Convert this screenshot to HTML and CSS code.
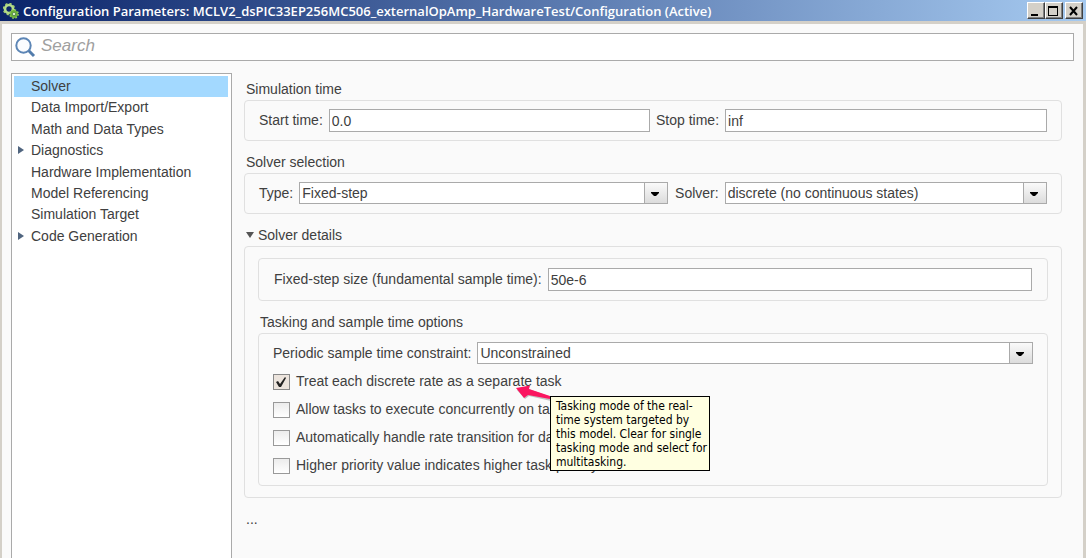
FILE: index.html
```html
<!DOCTYPE html>
<html lang="en">
<head>
<meta charset="utf-8">
<title>Configuration Parameters</title>
<link rel="stylesheet" href="styles.css">
</head>
<body>
<div class="window">
  <header class="titlebar">
    <svg class="app-icon" width="16" height="16" viewBox="0 0 16 16" aria-hidden="true">
      <circle cx="6" cy="6" r="4" fill="none" stroke="#b5dd8c" stroke-width="2.6"/>
      <circle cx="6" cy="6" r="5.4" fill="none" stroke="#a5d175" stroke-width="1.6" stroke-dasharray="2.2 2"/>
      <circle cx="11" cy="11" r="2.8" fill="#173a5c" stroke="#6cb03a" stroke-width="2.4"/>
      <circle cx="11" cy="11" r="4.2" fill="none" stroke="#8cc858" stroke-width="1.4" stroke-dasharray="1.7 1.6"/>
      <circle cx="11" cy="11" r="1.3" fill="#d9eec4"/>
    </svg>
    <h1 class="title">Configuration Parameters: MCLV2_dsPIC33EP256MC506_externalOpAmp_HardwareTest/Configuration (Active)</h1>
    <div class="window-buttons">
      <button class="window-button" type="button" aria-label="Minimize">
        <svg width="14" height="12" viewBox="0 0 14 12"><path d="M2 9h7v2H2z"/></svg>
      </button>
      <button class="window-button" type="button" aria-label="Maximize">
        <svg width="14" height="12" viewBox="0 0 14 12"><path fill-rule="evenodd" d="M1 1h10v10H1zM2 3v7h8V3z"/></svg>
      </button>
      <button class="window-button close" type="button" aria-label="Close">
        <svg width="14" height="12" viewBox="0 0 14 12"><path d="M3 2l7 8M10 2l-7 8" stroke="#000" stroke-width="2"/></svg>
      </button>
    </div>
  </header>
  <div class="client">
    <label class="search">
      <svg width="21" height="21" viewBox="0 0 21 21" aria-hidden="true">
        <circle cx="8.500" cy="8.500" r="7.200" fill="#fbfcfe" stroke="#5d86b6" stroke-width="2"/>
        <path d="M13.800 13.800l5.200 5.200" stroke="#527cac" stroke-width="3"/>
      </svg>
      <input class="search-input" type="search" placeholder="Search" aria-label="Search">
    </label>
    <div class="columns">
      <nav class="tree" aria-label="Categories">
        <ul class="tree-list">
          <li><a class="tree-item selected" href="#solver">Solver</a></li>
          <li><a class="tree-item" href="#data">Data Import/Export</a></li>
          <li><a class="tree-item" href="#math">Math and Data Types</a></li>
          <li><a class="tree-item expandable" href="#diagnostics">Diagnostics</a></li>
          <li><a class="tree-item" href="#hardware">Hardware Implementation</a></li>
          <li><a class="tree-item" href="#model">Model Referencing</a></li>
          <li><a class="tree-item" href="#target">Simulation Target</a></li>
          <li><a class="tree-item expandable" href="#code">Code Generation</a></li>
        </ul>
      </nav>
      <main class="panel">
        <section class="section">
          <h2 class="heading">Simulation time</h2>
          <div class="group row">
            <div class="field">
              <label for="start">Start time:</label>
              <input class="text" id="start" type="text" value="0.0">
            </div>
            <div class="field">
              <label for="stop">Stop time:</label>
              <input class="text" id="stop" type="text" value="inf">
            </div>
          </div>
        </section>
        <section class="section">
          <h2 class="heading">Solver selection</h2>
          <div class="group row solver-row">
            <div class="field">
              <label for="type">Type:</label>
              <span class="combo">
                <select class="select" id="type"><option>Fixed-step</option></select>
                <svg class="combo-arrow" width="8" height="4" viewBox="0 0 8 4"><path d="M0 0h8v1L5 4H3L0 1z"/></svg>
              </span>
            </div>
            <div class="field">
              <label for="solver">Solver:</label>
              <span class="combo">
                <select class="select" id="solver"><option>discrete (no continuous states)</option></select>
                <svg class="combo-arrow" width="8" height="4" viewBox="0 0 8 4"><path d="M0 0h8v1L5 4H3L0 1z"/></svg>
              </span>
            </div>
          </div>
        </section>
        <section class="section">
          <h2 class="heading"><button class="disclosure" type="button" aria-expanded="true">
            <svg width="8" height="6" viewBox="0 0 8 6"><path d="M0 0h8L4 6z" fill="#555"/></svg>Solver details</button></h2>
          <div class="group details">
            <div class="group row step">
              <div class="field">
                <label for="step">Fixed-step size (fundamental sample time):</label>
                <input class="text" id="step" type="text" value="50e-6">
              </div>
            </div>
            <section class="section">
              <h3 class="heading">Tasking and sample time options</h3>
              <div class="group tasking">
                <div class="field">
                  <label for="constraint">Periodic sample time constraint:</label>
                  <span class="combo">
                    <select class="select" id="constraint"><option>Unconstrained</option></select>
                    <svg class="combo-arrow" width="8" height="4" viewBox="0 0 8 4"><path d="M0 0h8v1L5 4H3L0 1z"/></svg>
                  </span>
                </div>
                <div class="checks">
                  <div class="check-line">
                    <label class="check"><span class="box-wrap"><input class="box" type="checkbox" checked aria-describedby="tip"><svg class="mark" width="12" height="12" viewBox="0 0 12 12"><path d="M1 6l2-1 2 3 5-7 1 1-5 9H4z" fill="#222"/></svg></span>Treat each discrete rate as a separate task</label>
                    <svg class="pointer" width="38" height="18" viewBox="0 0 38 18" aria-hidden="true">
                      <path d="M3 5l8 9 4-3 22 5V12L15 4z" fill="#888" opacity=".5"/>
                      <path d="M2 3L16 0.500 15 4 36 11v3L14 10l-4 3z" fill="#fb1560"/>
                    </svg>
                    <div class="tooltip" id="tip" role="tooltip">Tasking mode of the real-<br>time system targeted by<br>this model. Clear for single<br>tasking mode and select for<br>multitasking.</div>
                  </div>
                  <label class="check"><span class="box-wrap"><input class="box" type="checkbox"></span>Allow tasks to execute concurrently on target</label>
                  <label class="check"><span class="box-wrap"><input class="box" type="checkbox"></span>Automatically handle rate transition for data transfer</label>
                  <label class="check"><span class="box-wrap"><input class="box" type="checkbox"></span>Higher priority value indicates higher task priority</label>
                </div>
              </div>
            </section>
          </div>
        </section>
        <p class="more">...</p>
      </main>
    </div>
  </div>
</div>
</body>
</html>
```
FILE: styles.css
```css
* {
  box-sizing: border-box;
}

body {
  margin: 0;
  font: 14px/18px "Liberation Sans", Arial, sans-serif;
  color: #404040;
}

input,
select,
button {
  font: inherit;
  color: inherit;
  margin: 0;
  border-radius: 0;
}

.window {
  display: flex;
  flex-direction: column;
  min-height: 100vh;
  background: #d4d0c8;
}

.titlebar {
  display: flex;
  align-items: center;
  height: 21px;
  padding: 0 3px;
  background: linear-gradient(90deg, #0a246a, #a6caf0);
}

.title {
  flex: 1;
  margin: 0 0 0 4px;
  font: 600 13px/20px "Open Sans", Tahoma, sans-serif;
  color: #fff;
  white-space: nowrap;
}

.window-buttons {
  display: flex;
}

.window-button {
  display: grid;
  place-items: center;
  width: 18px;
  height: 17px;
  padding: 0;
  background: #d4d0c8;
  border: 1px solid;
  border-color: #fff #404040 #404040 #fff;
  box-shadow: inset -1px -1px #808080;
}

.window-button.close {
  margin-left: 2px;
}

.client {
  flex: 1;
  display: flex;
  flex-direction: column;
  gap: 12px;
  margin: 3px 3px 0 2px;
  padding: 9px 9px 0;
  background: #fafafa;
}

.search {
  display: flex;
  align-items: center;
  gap: 5px;
  height: 28px;
  padding: 0 3px;
  border: 1px solid #aaa;
  background: #fff;
}

.search-input {
  flex: 1;
  height: 24px;
  padding: 0 0 2px;
  border: 0;
  outline: 0;
  background: none;
  font-size: 17px;
  font-style: italic;
}

.search-input::placeholder {
  color: #a0a0a0;
}

.columns {
  flex: 1;
  display: flex;
  gap: 12px;
}

.tree {
  width: 221px;
  flex: none;
  padding: 2px 3px 0 2px;
  border: 1px solid #aaa;
  border-bottom: 0;
  background: #fff;
}

.tree-list {
  display: grid;
  grid-auto-rows: 1fr;
  height: 171px;
  margin: 0;
  padding: 0;
  list-style: none;
}

.tree-item {
  position: relative;
  display: block;
  height: 100%;
  padding-left: 17px;
  line-height: 21px;
  color: inherit;
  text-decoration: none;
}

.tree-item.selected {
  background: #a3d9ff;
}

.expandable::before {
  content: "";
  position: absolute;
  left: 4px;
  top: 6px;
  border: 4px solid transparent;
  border-left: 6px solid #50657f;
  border-right: 0;
}

.panel {
  flex: 1;
  min-width: 0;
  padding: 7px 12px 0 0;
}

.section {
  margin-bottom: 12px;
}

.heading {
  margin: 0 0 2px 2px;
  font-size: 14px;
  font-weight: normal;
  line-height: 18px;
}

.disclosure {
  display: flex;
  align-items: center;
  gap: 4px;
  padding: 0;
  border: 0;
  background: none;
}

.group {
  border: 1px solid #e0e0e0;
  border-radius: 4px;
}

.row {
  display: flex;
  gap: 6px;
  padding: 8px 14px;
}

.solver-row {
  display: grid;
  grid-template-columns: 11fr 10fr;
  gap: 7px;
}

.field {
  flex: 1;
  display: flex;
  align-items: flex-start;
  gap: 6px;
  min-height: 23px;
  line-height: 22px;
}

.text {
  flex: 1;
  min-width: 0;
  height: 23px;
  padding: 0 2px;
  border: 1px solid #aaa;
  background: #fff;
}

.combo {
  position: relative;
  flex: 1;
  display: flex;
}

.select {
  flex: 1;
  min-width: 0;
  height: 22px;
  padding: 0 24px 0 2px;
  line-height: 18px;
  border: 1px solid #aaa;
  appearance: none;
  background:
    linear-gradient(#aaa, #aaa) right 22px top / 1px 100% no-repeat,
    linear-gradient(#fafafa, #dcdcdc) right top / 22px 100% no-repeat,
    #fff;
}

.combo-arrow {
  position: absolute;
  right: 9px;
  top: 10px;
  pointer-events: none;
}

.details {
  padding: 11px 13px 0;
}

.details .section {
  margin-bottom: 11px;
}

.step {
  margin-bottom: 12px;
  padding: 9px 15px;
}

.tasking {
  padding: 8px 14px 10px;
}

.checks {
  display: grid;
  gap: 10px;
  margin-top: 8px;
}

.check-line {
  position: relative;
}

.check {
  display: flex;
  align-items: flex-start;
  gap: 6px;
  height: 18px;
  line-height: 16px;
  white-space: nowrap;
}

.box-wrap {
  position: relative;
  display: flex;
  margin-top: 1px;
}

.box {
  width: 17px;
  height: 16px;
  border: 1px solid #999;
  appearance: none;
  background: linear-gradient(#ececec, #fff);
}

.box:checked {
  border-color: #888;
  background: #ece4dd;
}

.mark {
  position: absolute;
  left: 2px;
  top: 2px;
  pointer-events: none;
}

.pointer {
  position: absolute;
  left: 241px;
  top: 12px;
}

.tooltip {
  position: absolute;
  left: 277px;
  top: 23px;
  padding: 2px 5px 1px;
  width: 160px;
  border: 1px solid #000;
  background: #ffffe1;
  color: #000;
  font: 12px/14px "DejaVu Sans Condensed", Tahoma, sans-serif;
  white-space: nowrap;
}

.more {
  margin: 0 0 0 2px;
}
```
